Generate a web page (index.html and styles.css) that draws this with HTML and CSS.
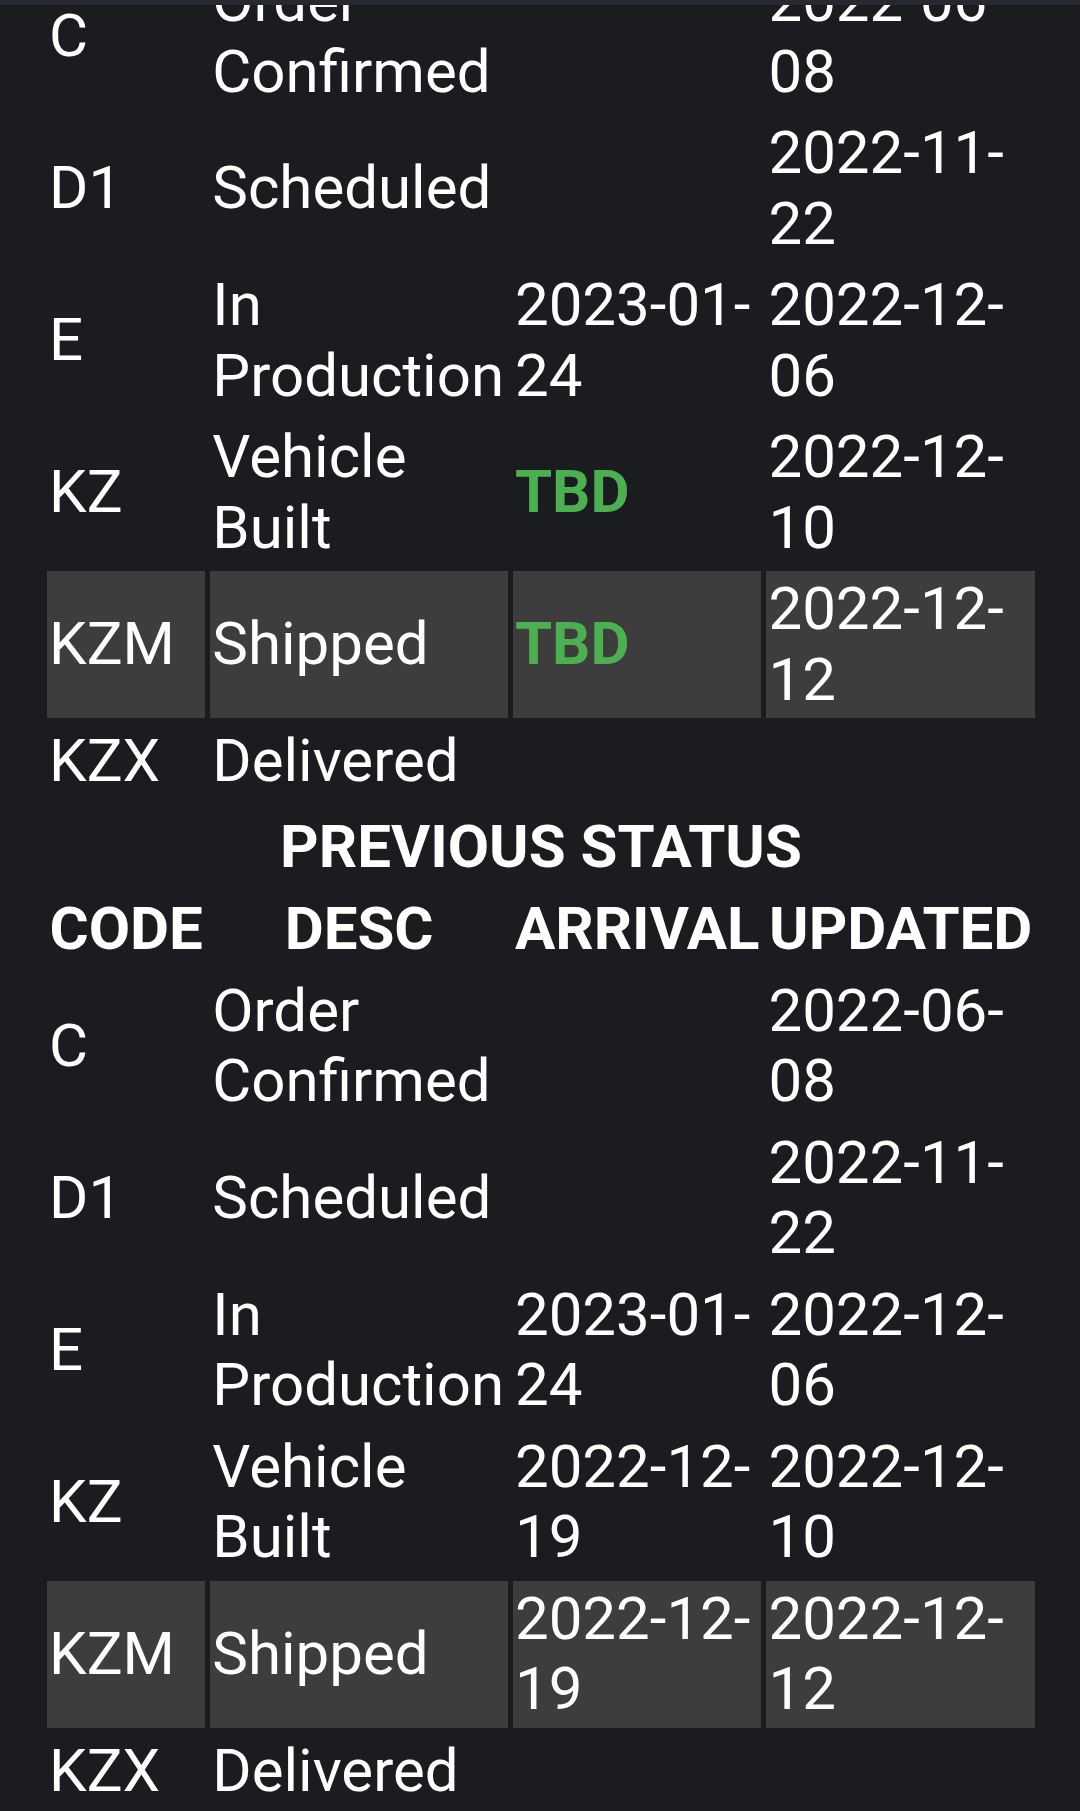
FILE: index.html
```html
<!DOCTYPE html>
<html lang="en">
<head>
    <meta charset="UTF-8">
    <meta name="viewport" content="width=device-width, initial-scale=1.0">
    <title>Order Status</title>
    <link rel="stylesheet" href="styles.css">
</head>
<body>
    <div class="topbar"></div>
    <div class="page">
        <table class="status first">
            <colgroup>
                <col class="c-code"><col class="c-desc"><col class="c-arr"><col class="c-upd">
            </colgroup>
            <tr><td>C</td><td>Order Confirmed</td><td></td><td>2022-06-08</td></tr>
            <tr><td>D1</td><td>Scheduled</td><td></td><td>2022-11-22</td></tr>
            <tr><td>E</td><td>In Production</td><td>2023-01-24</td><td>2022-12-06</td></tr>
            <tr><td>KZ</td><td>Vehicle Built</td><td class="tbd">TBD</td><td>2022-12-10</td></tr>
            <tr class="current"><td>KZM</td><td>Shipped</td><td class="tbd">TBD</td><td>2022-12-12</td></tr>
            <tr><td>KZX</td><td>Delivered</td><td></td><td></td></tr>
        </table>

        <div class="title">PREVIOUS STATUS</div>

        <table class="status">
            <colgroup>
                <col class="c-code"><col class="c-desc"><col class="c-arr"><col class="c-upd">
            </colgroup>
            <tr><th>CODE</th><th>DESC</th><th>ARRIVAL</th><th>UPDATED</th></tr>
            <tr><td>C</td><td>Order Confirmed</td><td></td><td>2022-06-08</td></tr>
            <tr><td>D1</td><td>Scheduled</td><td></td><td>2022-11-22</td></tr>
            <tr><td>E</td><td>In Production</td><td>2023-01-24</td><td>2022-12-06</td></tr>
            <tr><td>KZ</td><td>Vehicle Built</td><td>2022-12-19</td><td>2022-12-10</td></tr>
            <tr class="current"><td>KZM</td><td>Shipped</td><td>2022-12-19</td><td>2022-12-12</td></tr>
            <tr><td>KZX</td><td>Delivered</td><td></td><td></td></tr>
        </table>
    </div>
</body>
</html>
```
FILE: styles.css
```css
html {
    background-color: #1b1c1f;
}

body {
    margin: 0;
    color: #ffffff;
    font-family: Roboto, "Noto Sans", sans-serif;
    font-size: 60px;
    line-height: 70.5px;
}

.topbar {
    position: fixed;
    top: 0;
    left: 0;
    right: 0;
    height: 5px;
    background: #262a30;
}

.page {
    padding: 0 40px 0 42px;
}

.status {
    width: 100%;
    table-layout: fixed;
    border-collapse: separate;
    border-spacing: 5px;
}

.status.first {
    margin-top: -42px;
}

.c-code { width: 158px; }
.c-desc { width: 297px; }
.c-arr { width: 248px; }
.c-upd { width: 268px; }

.status td,
.status th {
    padding: 3px 2px;
    vertical-align: middle;
}

.status td {
    text-align: left;
    font-weight: normal;
}

.status th {
    text-align: center;
    font-weight: bold;
}

.status .current td {
    background: #3d3d3d;
}

.status td.tbd {
    color: #4caf50;
    font-weight: bold;
}

.title {
    margin: 7px 0 4px;
    text-align: center;
    font-weight: bold;
}
```
